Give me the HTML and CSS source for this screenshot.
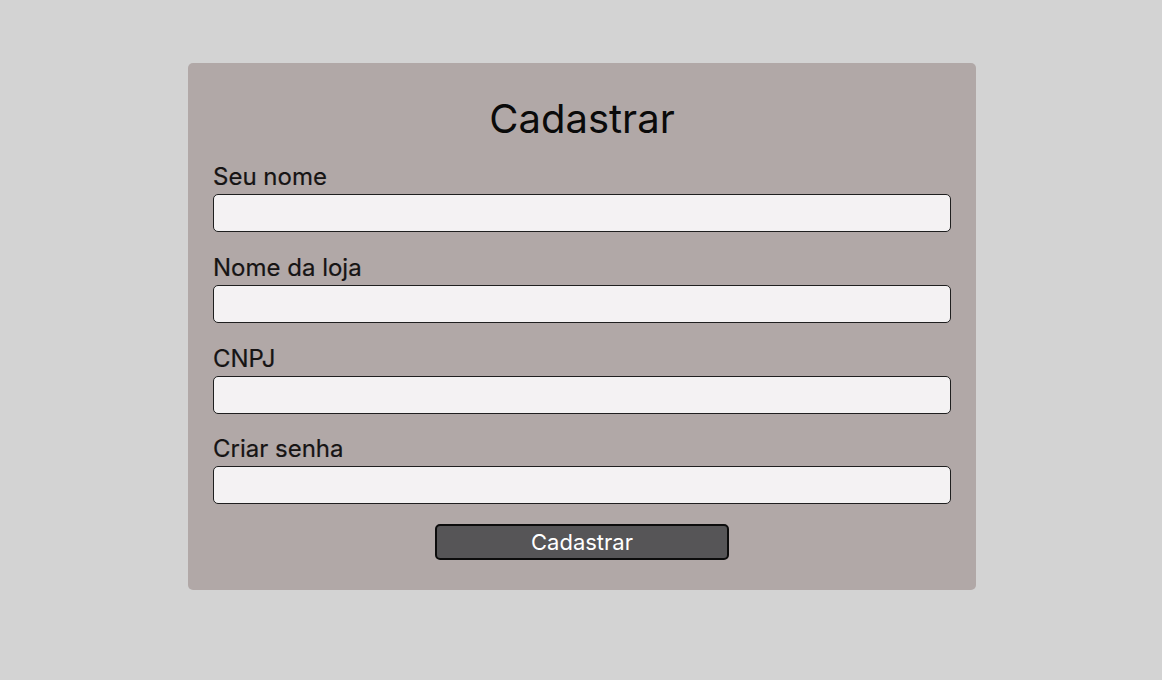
FILE: index.html
```html
<!DOCTYPE html>
<html lang="pt-BR">
<head>
<meta charset="utf-8">
<title>Cadastrar</title>
<link rel="stylesheet" href="styles.css">
</head>
<body>
<main class="page">
  <form class="card">
    <h1 class="title">Cadastrar</h1>
    <div class="field">
      <label class="label" for="nome">Seu nome</label>
      <input class="input" id="nome" type="text">
    </div>
    <div class="field">
      <label class="label" for="loja">Nome da loja</label>
      <input class="input" id="loja" type="text">
    </div>
    <div class="field field-tight">
      <label class="label" for="cnpj">CNPJ</label>
      <input class="input" id="cnpj" type="text">
    </div>
    <div class="field field-tight">
      <label class="label" for="senha">Criar senha</label>
      <input class="input" id="senha" type="password">
    </div>
    <button class="button" type="button">Cadastrar</button>
  </form>
</main>
</body>
</html>
```

FILE: styles.css
```css
* { box-sizing: border-box; }
html, body {
  margin: 0;
  padding: 0;
  background: #d3d3d3;
  font-family: Inter, "Liberation Sans", sans-serif;
}
.page {
  display: flex;
  justify-content: center;
  align-items: flex-start;
  padding-top: 63px;
  padding-left: 2px;
  min-height: 680px;
}
.card {
  width: 788px;
  background: #b1a8a7;
  border-radius: 5px;
  padding: 32px 25px 30px;
  display: flex;
  flex-direction: column;
}
.title {
  margin: 0 0 19px;
  font-size: 40px;
  font-weight: 400;
  line-height: 48px;
  text-align: center;
  color: #0a0a0a;
}
.field {
  display: flex;
  flex-direction: column;
  margin-bottom: 21px;
  flex-shrink: 0;
}
.field-tight { margin-bottom: 20px; }
.label {
  font-size: 24px;
  line-height: 29px;
  margin-bottom: 3px;
  color: #161414;
  -webkit-text-stroke: 0.2px #161414;
}
.input {
  height: 38px;
  width: 100%;
  background: #f4f2f3;
  border: 1px solid #1f1f1f;
  border-radius: 5px;
  font-family: inherit;
  font-size: 20px;
  padding: 0 8px;
}
.button {
  align-self: center;
  flex-shrink: 0;
  width: 294px;
  height: 36px;
  background: #565557;
  color: #ffffff;
  border: 2px solid #0c0c0c;
  border-radius: 5px;
  font-family: inherit;
  font-size: 22px;
  line-height: 1;
  padding: 0;
}
```
